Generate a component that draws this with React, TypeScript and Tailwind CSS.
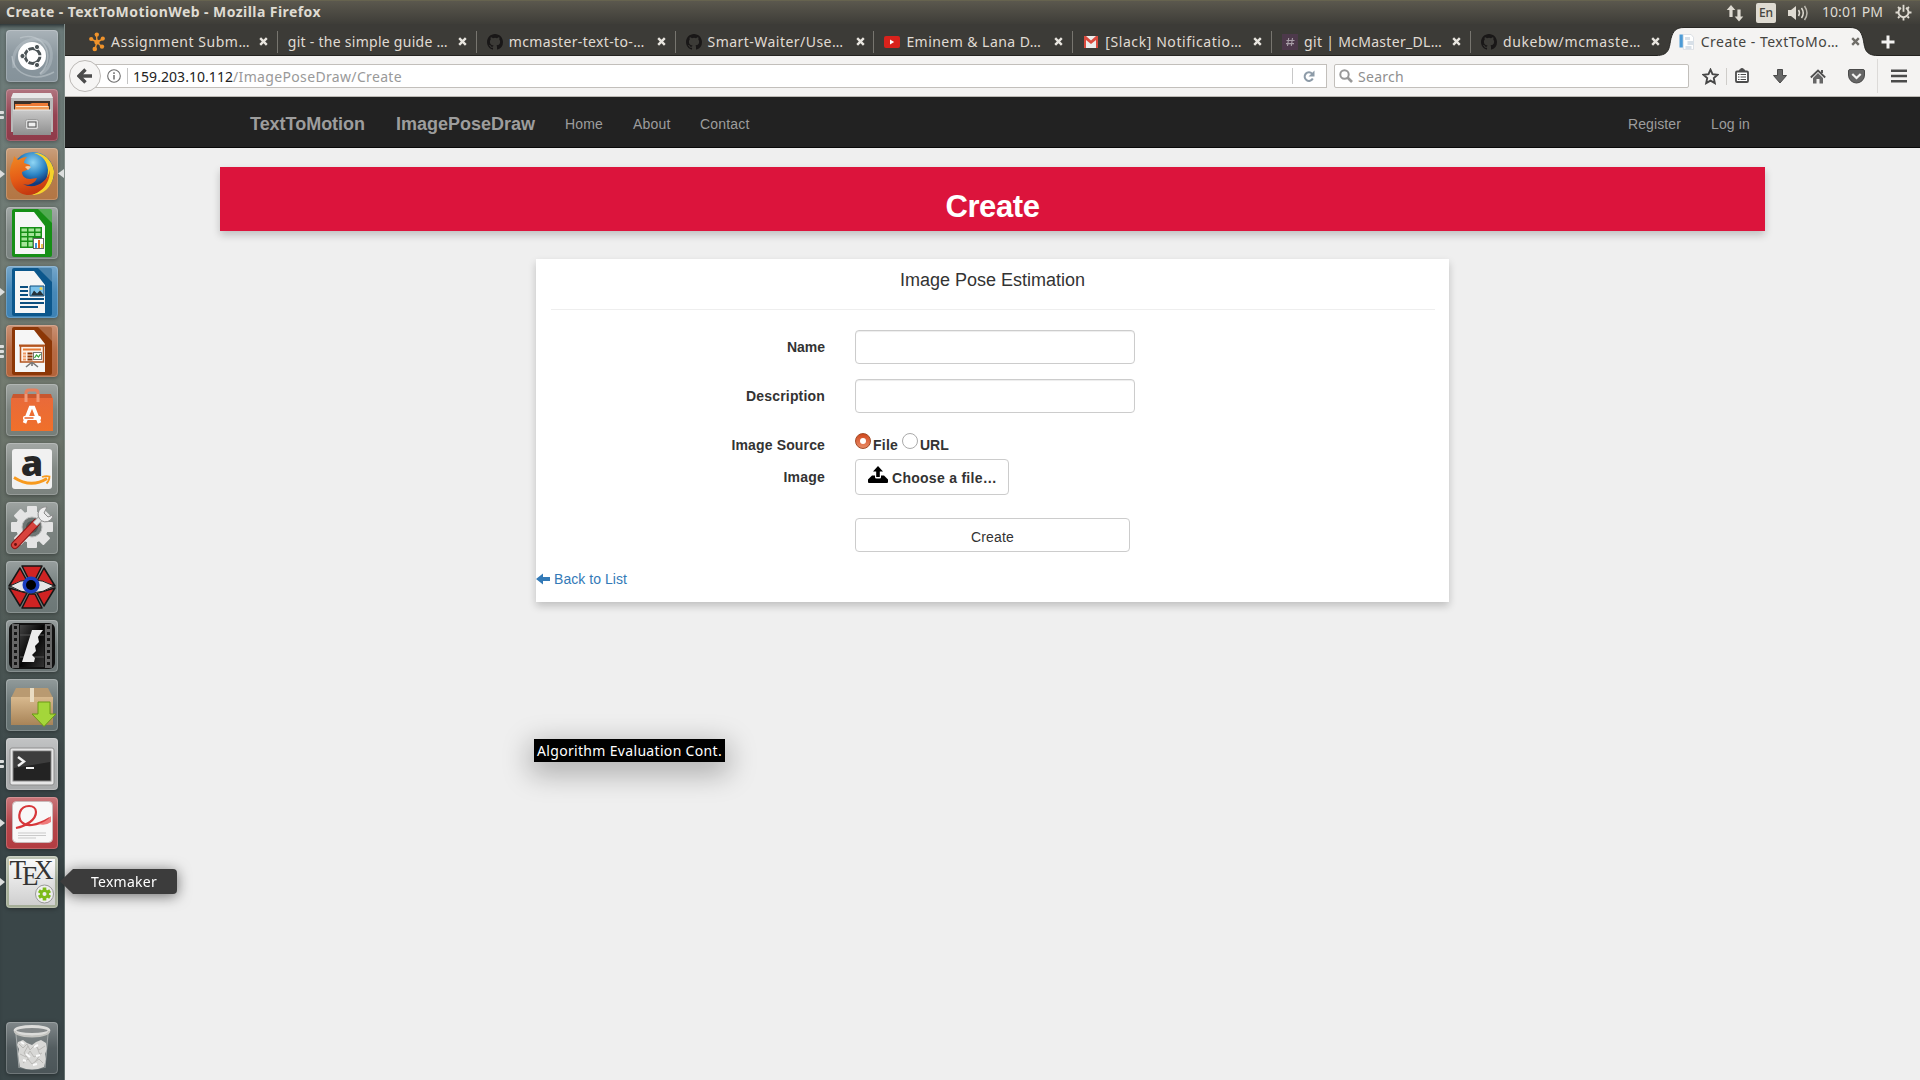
import React, { useLayoutEffect, useRef, useState } from "react";

/* Text whose tracking is adjusted so that it fills a given width. */
function Fit({ w, className = "", children }: { w: number; className?: string; children: string }) {
  const ref = useRef<HTMLSpanElement>(null);
  const [ls, setLs] = useState(0);
  useLayoutEffect(() => {
    if (ref.current) {
      const natural = ref.current.getBoundingClientRect().width - ls * children.length;
      setLs((w - natural) / children.length);
    }
  }, [w, children]);
  return (
    <span ref={ref} className={`inline-block whitespace-pre ${className}`} style={{ letterSpacing: `${ls}px` }}>
      {children}
    </span>
  );
}

const UI = "font-['Noto_Sans','Open_Sans',sans-serif]";

/* ---------- favicons ---------- */
const Flower = () => (
  <svg width="16" height="20" viewBox="0 0 16 20" fill="#f0932b" stroke="#f0932b">
    <path d="M8 10 7.5 3M8 10 2 7M8 10l6-3M8 10l-2 7M8 10l5 5" strokeWidth="1.4" />
    <g stroke="none">
      <circle cx="8" cy="10" r="2.6" /><circle cx="7.8" cy="2.6" r="2.2" /><circle cx="2.2" cy="7" r="2.1" />
      <circle cx="13.8" cy="6.6" r="2.1" /><circle cx="5.8" cy="17" r="2.3" /><circle cx="13" cy="14.6" r="2.2" />
    </g>
  </svg>
);
const Github = () => (
  <svg width="16" height="16" viewBox="0 0 16 16" fill="#191717">
    <path d="M8 0C3.58 0 0 3.58 0 8c0 3.54 2.29 6.53 5.47 7.59.4.07.55-.17.55-.38 0-.19-.01-.82-.01-1.49-2.01.37-2.53-.49-2.69-.94-.09-.23-.48-.94-.82-1.13-.28-.15-.68-.52-.01-.53.63-.01 1.08.58 1.23.82.72 1.21 1.87.87 2.33.66.07-.52.28-.87.51-1.07-1.78-.2-3.64-.89-3.64-3.95 0-.87.31-1.59.82-2.15-.08-.2-.36-1.02.08-2.12 0 0 .67-.21 2.2.82a7.42 7.42 0 0 1 4 0c1.53-1.04 2.2-.82 2.2-.82.44 1.1.16 1.92.08 2.12.51.56.82 1.27.82 2.15 0 3.07-1.87 3.75-3.65 3.95.29.25.54.73.54 1.48 0 1.07-.01 1.93-.01 2.2 0 .21.15.46.55.38A8.01 8.01 0 0 0 16 8c0-4.42-3.58-8-8-8Z" />
  </svg>
);
const Youtube = () => (
  <svg width="16" height="12" viewBox="0 0 16 12"><rect width="16" height="12" rx="2" fill="#d9221c" /><path d="M6 3.6v4.8L10.200 6z" fill="#fff" /></svg>
);
const Gmail = () => (
  <svg width="14" height="12" viewBox="0 0 14 12"><path fill="#ececec" d="M0 0h14v12H0z" /><path fill="#d94a3e" d="M0 0h2l5 4.500L12 0h2v12h-2V4L7 8 2 4v8H0z" /></svg>
);
const Slack = () => (
  <svg width="16" height="16" viewBox="0 0 16 16"><rect width="16" height="16" fill="#4d394b" /><path d="M6.700 4 5.500 12M10.500 4 9.300 12M4.500 6.500h8M4 9.600h8" stroke="#a99fa8" strokeWidth="1.100" /></svg>
);
const DocIcon = () => (
  <svg width="16" height="16" viewBox="0 0 16 16">
    <path fill="#fff" stroke="#c8d0d8" strokeWidth=".6" d="M4.300.4H12l2.500 3v12H4.300z" />
    <path fill="#4d9bd6" d="M.5.500h3.300v13H.5z" /><path fill="#d8e0e8" d="M6 3h5v3H6zM8.500 7h6.500v4H8.500zM6.500 12h6v3h-6z" />
  </svg>
);

type TabDef = { title: string; w: number; icon?: React.ReactNode };
const tabs: TabDef[] = [
  { title: "Assignment Subm…", w: 139, icon: <Flower /> },
  { title: "git - the simple guide …", w: 160 },
  { title: "mcmaster-text-to-…", w: 136, icon: <Github /> },
  { title: "Smart-Waiter/Use…", w: 136, icon: <Github /> },
  { title: "Eminem & Lana D…", w: 135, icon: <Youtube /> },
  { title: "[Slack] Notificatio…", w: 137, icon: <Gmail /> },
  { title: "git | McMaster_DL…", w: 138, icon: <Slack /> },
  { title: "dukebw/mcmaste…", w: 138, icon: <Github /> },
];

const Cross = ({ color }: { color: string }) => (
  <svg width="9" height="9" viewBox="0 0 9 9" className="shrink-0"><path d="m1.200 1.200 6.600 6.600M7.800 1.200 1.200 7.800" stroke={color} strokeWidth="2.400" /></svg>
);

function TopPanel() {
  return (
    <div className={`flex h-6 shrink-0 items-center justify-between border-t border-[#66634f] bg-linear-to-b from-[#5b584e] to-[#3e3d38] pl-1.5 pr-2 text-[#dfdbd2] ${UI}`}>
      <Fit w={315} className="-mt-px text-[14px] font-bold leading-[20px]">Create - TextToMotionWeb - Mozilla Firefox</Fit>
      <div className="flex items-center">
        <svg width="18" height="18" viewBox="0 0 18 18" fill="#dfdbd2" className="mr-[12px]">
          <path d="M5 1 9.300 6H6.600v7H3.400V6H.7zM13 17.500l-4.300-5h2.700v-7h3.200v7h2.700z" />
        </svg>
        <div className="mr-3 flex h-5 w-5 items-center justify-center rounded-[2px] bg-[#dfdbd2] text-[12px] font-medium text-[#45443e]">En</div>
        <svg width="21" height="18" viewBox="0 0 21 18" className="mr-[13px]" fill="none" stroke="#dfdbd2" strokeWidth="1.500">
          <path fill="#dfdbd2" stroke="none" d="M0 6h3l5-4v14l-5-4H0z" /><path d="M10.500 6q2 3 0 6M13.500 4q3.500 5 0 10" /><path d="M16.500 2q5 7 0 14" opacity=".75" />
        </svg>
        <Fit w={61} className="-mt-[2px] mr-[12px] text-[14px] leading-[20px]">10:01 PM</Fit>
        <svg width="17" height="17" viewBox="0 0 17 17" fill="none" stroke="#dfdbd2">
          <path d="M6 3.900a5 5 0 1 0 5 0" strokeWidth="1.900" /><path d="M8.500.800v7" strokeWidth="1.800" />
          <path d="M3 3l1.500 1.500M14 3l-1.500 1.500M.5 8.500h3M16.500 8.500h-3M3 14l1.500-1.500M14 14l-1.500-1.500M8.500 16.500v-3" strokeWidth="1.800" />
        </svg>
      </div>
    </div>
  );
}

function TabStrip() {
  return (
    <div className={`flex h-8 shrink-0 border-b border-[#23221f] bg-[#3c3b37] pl-[14px] text-[14px] text-[#e0dcd4] ${UI}`}>
      {tabs.map((t, i) => (
        <div key={i} className="flex h-8 w-[198.850px] shrink-0 items-center pt-[3px]">
          <div className="flex w-[174px] items-center pl-[10px]">
            {t.icon && <span className="mr-1.5 flex w-4 justify-center">{t.icon}</span>}
            <Fit w={t.w} className="leading-5">{t.title}</Fit>
          </div>
          <span className="ml-[6px] flex w-[9px]"><Cross color="#e8e5df" /></span>
          <span className={`ml-auto h-[22px] w-px ${i === 7 ? "" : "bg-[#77756f]"}`} />
        </div>
      ))}
      <div className="relative -ml-[13px] h-8 w-[224px] shrink-0 text-[#45443f]">
        <svg width="224" height="33" viewBox="0 0 224 33" className="absolute left-0 top-0">
          <path fill="#f4f3f2" stroke="#282724" d="M-1 31.500c14 0 13-8 15-17C16 7 19 3.500 27 3.500h166c8 0 11 3.500 13 11 2 9 1 17 15 17v4H-1z" />
          <path fill="#f4f3f2" d="M0 32h222v2H0z" />
        </svg>
        <div className="relative flex h-8 items-center pl-[22px] pt-[3px]">
          <DocIcon />
          <Fit w={138} className="ml-1.5 leading-5">Create - TextToMo…</Fit>
          <span className="ml-[12px] flex"><Cross color="#6f6d68" /></span>
        </div>
      </div>
      <svg width="14" height="14" viewBox="0 0 14 14" className="mt-[11px]"><path d="M7 .500v13M.500 7h13" stroke="#f4f3f2" strokeWidth="3" /></svg>
    </div>
  );
}

function Toolbar() {
  return (
    <div className={`flex h-[41px] shrink-0 items-center border-b border-[#bcb9b4] bg-[#f4f3f2] pl-1 text-[14px] ${UI}`}>
      <div className="relative z-10 flex h-8 w-8 items-center justify-center rounded-full border border-[#bcb9b6] bg-[#f6f5f4]">
        <svg width="16" height="16" viewBox="0 0 16 16"><path d="M8.500 1.500 2 8l6.500 6.500M2.500 8H15" fill="none" stroke="#4c4c4c" strokeWidth="3.400" /></svg>
      </div>
      <div className="-ml-4 flex h-6 w-[1242px] items-center border border-[#c2bfbb] bg-white pl-[21px]">
        <svg width="14" height="14" viewBox="0 0 14 14" fill="none" stroke="#6d6d6d"><circle cx="7" cy="7" r="6.300" strokeWidth="1.100" /><path d="M7 6v4.500M7 3.300V5" strokeWidth="1.500" /></svg>
        <span className="ml-[6px] h-4 w-px bg-[#c4c4c4]" />
        <span className="ml-[5px] flex pt-px leading-5 text-[#999]">
          <Fit w={100} className="text-[#222]">159.203.10.112</Fit>
          <Fit w={169}>/ImagePoseDraw/Create</Fit>
        </span>
        <span className="ml-auto h-4 w-px bg-[#c8c8c8]" />
        <svg width="12" height="13" viewBox="0 0 12 13" className="ml-[10px] mr-[11px]"><path d="M9.800 8.500a4.300 4.300 0 1 1-.6-4.700" fill="none" stroke="#8d9ba8" strokeWidth="2" /><path d="M11.500.500v6h-6z" fill="#8d9ba8" /></svg>
      </div>
      <div className="ml-[7px] flex h-6 w-[355px] items-center rounded-[2px] border border-[#c2bfbb] bg-white pl-1">
        <svg width="14" height="14" viewBox="0 0 14 14" fill="none" stroke="#989898"><circle cx="5.500" cy="5.500" r="4.200" strokeWidth="2" /><path d="m8.500 8.500 4.500 4.500" strokeWidth="2.600" /></svg>
        <Fit w={46} className="ml-[5px] pt-px leading-5 text-[#8f8f8f]">Search</Fit>
      </div>
      <svg width="17" height="17" viewBox="0 0 17 17" className="ml-[13px]"><path d="m8.500 1.700 2 4.500 5 .6-3.700 3.300 1 5-4.300-2.500-4.300 2.500 1-5L1.500 6.800l5-.6z" fill="none" stroke="#474747" strokeWidth="1.900" /></svg>
      <span className="ml-[7px] h-[17px] w-px bg-[#cfcdca]" />
      <svg width="14" height="16" viewBox="0 0 14 16" className="ml-[8px]" fill="none" stroke="#4c4c4c">
        <rect x="1" y="3.500" width="12" height="10.500" rx="1" strokeWidth="1.800" fill="#fff" /><path d="M4 3q1-2.500 3-2.500T10 3z" fill="#4c4c4c" /><path d="M3 6.500h1.500M3 9h1.500M3 11.500h1.500M5.500 6.500h5.500M5.500 9h5.500M5.500 11.500h5.500" strokeWidth="1" />
      </svg>
      <svg width="14" height="15" viewBox="0 0 14 15" className="ml-[24px]"><path d="M4.500.500h5v6h4L7 14 .500 6.500h4z" fill="#666" stroke="#494949" /></svg>
      <svg width="16" height="15" viewBox="0 0 16 15" className="ml-[23px]"><path d="M3 9v5.500h3.500V10h3v4.500H13V9L8 4z" fill="#666" /><path d="m.8 8.500 7.200-7 7.200 7" fill="none" stroke="#4f4f4f" strokeWidth="1.800" /><path d="M11 1h2v3h-2z" fill="#555" /></svg>
      <svg width="17" height="15" viewBox="0 0 17 15" className="ml-[22px]"><path d="M2 .500h13q1.500 0 1.500 1.500v4a8 8 0 0 1-16 0V2Q.500.500 2 .500z" fill="#666" stroke="#4a4a4a" /><path d="m4.300 5 4.200 4 4.200-4" fill="none" stroke="#f4f3f2" strokeWidth="2.200" /></svg>
      <span className="ml-[12px] h-[34px] w-px bg-[#dcdad8]" />
      <svg width="16" height="14" viewBox="0 0 16 14" className="ml-[13px]"><path d="M0 1.700h16M0 7h16M0 12.300h16" stroke="#4b4b4b" strokeWidth="2.500" /></svg>
    </div>
  );
}

/* ---------- launcher icons, each drawn on a 52px tile ---------- */
const Ubuntu = () => (
  <>
    <path d="M8 38C4 14 26 4 40 12c8 6 8 26-6 32" fill="none" stroke="#c9d2d6" strokeWidth="3" opacity=".35" />
    <path d="M14 8C36 0 52 26 34 44M6 26c2 20 24 26 42 16" fill="none" stroke="#c9d2d6" strokeWidth="1.500" opacity=".5" />
    <circle cx="26" cy="26" r="14" fill="#fff" />
    <circle cx="26.500" cy="26" r="7.500" fill="none" stroke="#4b5356" strokeWidth="3" />
    <path d="M26 26 36 26M26 26l-6-9M26 26l-6 9" stroke="#fff" strokeWidth="1.300" />
    <g fill="#4b5356" stroke="#fff" strokeWidth="1"><circle cx="16.500" cy="26" r="2.600" /><circle cx="31" cy="17" r="2.600" /><circle cx="31" cy="35" r="2.600" /></g>
  </>
);
const Files = () => (
  <>
    <path d="M7 5h38l2 5v33H5V10z" fill="#b9b9b9" /><path d="M7 4h38l2 5H5z" fill="#e8e8e8" />
    <path d="M8 12h36v12H8z" fill="#3b3029" /><path d="M9 15h15l2-1h16v8H9z" fill="#ee7a35" /><path d="M9 17h34v5H9z" fill="#f09a55" /><path d="M10 17.500h32" stroke="#fbe3c6" />
    <path d="M7 21h38v25H7z" fill="url(#gGrey)" /><path d="M7 21h38" stroke="#e9e9e9" />
    <rect x="19.500" y="30.500" width="13" height="10" rx="2" fill="#ddd" stroke="#9a9a9a" /><rect x="22" y="33" width="8" height="5" fill="#eee" stroke="#4b4b4b" />
  </>
);
const Firefox = () => (
  <>
    <circle cx="27" cy="25" r="21" fill="url(#gBlue)" />
    <path d="M28 5c8-1 18 6 20 18 0 14-9 24-22 24 9-4 16-14 16-25-1-9-5-14-14-17z" fill="#f6d22c" />
    <path d="M44 22c0 14-9 24-21 25-12 0-19-10-19-22 0-5 1-8 3-12l1-5 4 4c3-2 6-3 9-3-2 2-3 4-3 6l6 2-1 4-7 3c0 4 3 7 8 7l7-1c-2 6-9 8-14 6 11 6 24-1 27-14z" fill="url(#gFox)" />
    <path d="M19 19q3-2 6 0l-3 3z" fill="#fbc99b" />
  </>
);
const Doc = ({ c, children }: { c: string; children: React.ReactNode }) => (
  <>
    <path d="M8 2h25l13 13v33q0 2-2 2H8q-2 0-2-2V4q0-2 2-2z" fill={c} />
    <path d="M29 2h15q2 0 2 2v15z" fill={c} /><path d="M32 2h12q2 0 2 2v12z" fill="#fff" opacity=".25" />
    <path d="M9 5h19l11 14v28H9z" fill="#f6f6f6" />{children}
  </>
);
const Calc = () => (
  <Doc c="#168f16">
    <path d="M14 20h22v21H14z" fill="#168f16" /><path d="M15.500 21.500h5.500v3h-5.500zM22.500 21.500h5.500v3h-5.500zM29.500 21.500h5v3h-5zM15.500 26h5.500v3h-5.500zM22.500 26h5.500v3h-5.500zM29.500 26h5v3h-5zM15.500 30.500h5.500v3h-5.500zM22.500 30.500h4v3h-4zM15.500 35h5.500v4.500h-5.500zM22.500 35h4v4.500h-4z" fill="#a5e59a" />
    <rect x="27.500" y="31.500" width="10" height="10" fill="#fff" stroke="#666" /><path d="M30 36v5" stroke="#3a8fd9" strokeWidth="2" /><path d="M33 33v8" stroke="#e5661a" strokeWidth="2" /><path d="M36 37v4" stroke="#e9b41a" strokeWidth="1.500" />
  </Doc>
);
const Writer = () => (
  <Doc c="#0c578c">
    <path d="M14 21h8M14 25h8M14 29h8M14 33h24M14 37h24M14 41h18" stroke="#0c4f80" strokeWidth="2" />
    <path d="M24 20h14v10H24z" fill="#7cc2ea" stroke="#0c4f80" /><path d="M25 29.500l3-5 3 3 3-3 4 5z" fill="#26323a" /><circle cx="35" cy="22.500" r="1.500" fill="#f0d24a" />
  </Doc>
);
const Impress = () => (
  <Doc c="#8c3707">
    <path d="M14.500 21h23v16h-23z" fill="#fdf1e8" stroke="#b3541e" strokeWidth="1.500" /><path d="M13 20.500h26" stroke="#b3541e" strokeWidth="2" />
    <path d="M17 24.500h18" stroke="#e57a35" strokeWidth="2" /><path d="M17 28.500h3M17 31.500h3M17 34.500h3" stroke="#ef9a64" strokeWidth="2" /><path d="M21.500 28.500h5M21.500 31.500h5M21.500 34.500h5" stroke="#8c3707" strokeWidth="2" />
    <rect x="27.500" y="27.500" width="8" height="7" fill="#fff" stroke="#777" /><path d="m28.500 33 2-3 2 2 2-3" fill="none" stroke="#3ca83c" strokeWidth="1.300" /><path d="m20 42 5-4h2l5 4M26 37v4" fill="none" stroke="#777" strokeWidth="1.600" />
  </Doc>
);
const Software = () => (
  <>
    <path d="M20 18v-9q0-3 3-3h6q3 0 3 3v9" fill="none" stroke="#e5805e" strokeWidth="3" />
    <path d="M7 10h38l2 6H5z" fill="#c8572f" /><path d="M5 14h42v33H5z" fill="url(#gOrange)" />
    <path d="M20 18v-8M32 18v-8" stroke="#f09a78" strokeWidth="3" />
    <path d="m18.500 39 6-15.500h3l6 15.500" fill="none" stroke="#fff" strokeWidth="3.600" /><rect x="17" y="32" width="18" height="4" rx="1.500" fill="#fff" /><path d="M18.500 34h9" stroke="#e8632c" strokeWidth="1.500" />
  </>
);
const Amazon = () => (
  <>
    <rect x="6" y="6" width="40" height="40" rx="3" fill="#f1f1f1" />
    <text x="26" y="32.500" textAnchor="middle" fontFamily="Open Sans" fontWeight="800" fontSize="36" fill="#262626">a</text>
    <path d="M8 34.500q17 11 33 1" fill="none" stroke="#f79a1e" strokeWidth="2.800" /><path d="M36 34q4-1.500 7.500-.500 0 4-3 7" fill="none" stroke="#f79a1e" strokeWidth="1.800" />
  </>
);
const Settings = () => (
  <>
    <g fill="#e4e4e4">
      {[0, 45, 90, 135].map((a) => <rect key={a} x="21" y="4" width="10" height="42" rx="1" transform={`rotate(${a} 26 25)`} />)}
      <circle cx="26" cy="25" r="16" />
    </g>
    <circle cx="26" cy="25" r="10" fill="#6f7674" stroke="#bbb" /><circle cx="26" cy="25" r="6" fill="#4e5553" />
    <path d="M9 43 30 21" stroke="#8e1515" strokeWidth="8" strokeLinecap="round" /><path d="M9 43 30 21" stroke="#d8433d" strokeWidth="6" strokeLinecap="round" />
    <path d="m29 22 9-9" stroke="#9a9a9a" strokeWidth="6" /><path d="m29 22 9-9" stroke="#e2e4e4" strokeWidth="4.500" />
    <path d="M41 5a7.500 7.500 0 1 0 6 8l-5 2-4-4z" fill="#eee" stroke="#8a8a8a" /><circle cx="9.500" cy="42.500" r="1.400" fill="#611" />
  </>
);
const EyeIcon = () => (
  <>
    <g fill="#cf2323" stroke="#161616" strokeWidth="1.500" strokeLinejoin="round">
      <path d="M16 5h20l-7 14h-6z" /><path d="M16 47h20l-7-14h-6z" /><path d="M14 7 3 25l18-5z" /><path d="M38 7l11 18-18-5z" /><path d="M14 45 3 27l18 5z" /><path d="M38 45l11-18-18 5z" />
    </g>
    <path d="M4 25q21-13 44 0-22 14-44 0z" fill="#e5e5e5" stroke="#222" /><circle cx="25" cy="24" r="8.500" fill="#1a3ec0" /><circle cx="25" cy="24" r="5" fill="#000" />
  </>
);
const Film = () => (
  <>
    <rect x="3" y="3" width="46" height="46" rx="6" fill="#111" /><path d="M6 4h7v44H6zM39 4h7v44h-7z" fill="#666" /><path d="M14 5h24v42H14z" fill="url(#gDark)" />
    <path d="M9.500 6v42M42.500 6v42" stroke="#151515" strokeWidth="3" strokeDasharray="3 3" /><path d="M14 15h24M14 37h24" stroke="#555" />
    <path d="M26 10h11l-3 4-2 3 1 5-4 4 1 5-4 4 3 3-1 4H16z" fill="#ececec" />
  </>
);
const Package = () => (
  <>
    <path d="M10 9h32l5 10H5z" fill="#b99a71" /><path d="M5 18h42v28H5z" fill="url(#gBox)" /><path d="M24 9h4v14h-4z" fill="#e9dcc3" />
    <path d="M32 23h12v12h6L38 47.500 26 35h6z" fill="#a4d63a" stroke="#6a9a14" />
  </>
);
const Terminal = () => (
  <>
    <rect x="4" y="10" width="44" height="37" rx="2" fill="#e6e6e6" stroke="#8e8e8e" /><rect x="7" y="13" width="38" height="30" fill="#232323" stroke="#888" /><path d="M8 14h36v10L8 30z" fill="#fff" opacity=".12" />
    <path d="m12 19 6 4.500-6 4.500" fill="none" stroke="#f2f2f2" strokeWidth="2.400" /><path d="M20 30h8" stroke="#f2f2f2" strokeWidth="2" />
  </>
);
const Reader = () => (
  <>
    <rect x="6.500" y="4.500" width="40" height="41" rx="4" fill="#f8f8f8" stroke="#c9b9b9" />
    <path d="M10 31c10-2 20-8 20-16 0-8-13-8-16 0-3 9 4 14 12 13 7-1 13-4 18-7" fill="none" stroke="#d7373a" strokeWidth="2.200" /><path d="M32 27q8-2 13-8v6q-5 4-13 2z" fill="#ef7b7b" />
    <path d="M12 36h28M12 38.500h28M12 41h18" stroke="#c9c9c9" />
  </>
);
const Tex = () => (
  <>
    <rect x="3" y="3" width="46" height="46" fill="url(#gPaper)" />
    <text fontFamily="Liberation Serif" fill="#333" fontSize="27" x="3.500" y="23">T<tspan x="16" y="29">E</tspan><tspan x="28" y="23">X</tspan></text>
    <circle cx="38.500" cy="38" r="9" fill="#eee" stroke="#999" />
    <g fill="#7dbb1a">{[0, 60, 120].map((a) => <rect key={a} x="36.700" y="31.500" width="3.600" height="13" transform={`rotate(${a} 38.500 38)`} />)}<circle cx="38.500" cy="38" r="4.500" /></g><circle cx="38.500" cy="38" r="2" fill="#eee" />
  </>
);
const Trash = () => (
  <>
    <path d="M9 10h34l-4 36q-13 4-26 0z" fill="#8a8f90" opacity=".5" />
    <path d="M12 20l5-2 4 3 5 2 4-3 5-2 5 3 1 6-2 5 1 5-2 8q-12 5-24 0l-1-6-1-7 1-5-2-4z" fill="#d8d8d6" />
    <path d="m13 22 4 4 4-4 3 6 5-5 4 5 6-4M14 32l6 3 4-6 4 6 8-4M17 41l5-4 4 5 7-5 4 4M22 24l-4 7 5 7M31 25l3 8-5 7" fill="none" stroke="#bab9b6" strokeWidth="1" />
    <path d="m15 20 3 2M28 25l4-2M20 32l4 3M30 34l4-1M17 38l3 1M27 43l4-1" stroke="#fafafa" strokeWidth="2" />
    <path d="M10 12l3 34M42 12l-3 34" stroke="#b8bcbc" strokeWidth="1" opacity=".7" />
    <ellipse cx="26" cy="8.500" rx="17" ry="4" fill="#85898a" stroke="#dcdcda" strokeWidth="2.800" /><path d="M9 9q0 5 17 5.500Q43 14 43 9" fill="none" stroke="#c4c4c0" strokeWidth="2" />
  </>
);

type Item = { icon: React.ReactNode; bg: string; marks?: number };
const items: Item[] = [
  { icon: <Ubuntu />, bg: "bg-[#85929a]" },
  { icon: <Files />, bg: "bg-[#8f3a49]", marks: 2 },
  { icon: <Firefox />, bg: "bg-[#b37644]", marks: 1 },
  { icon: <Calc />, bg: "bg-[#7b8481]" },
  { icon: <Writer />, bg: "bg-[#3d82b4]", marks: 1 },
  { icon: <Impress />, bg: "bg-[#b3633a]", marks: 3 },
  { icon: <Software />, bg: "bg-[#767e79]" },
  { icon: <Amazon />, bg: "bg-[#7c837f]" },
  { icon: <Settings />, bg: "bg-[#757d7a]" },
  { icon: <EyeIcon />, bg: "bg-[#6c7776]" },
  { icon: <Film />, bg: "bg-[#6a7474]" },
  { icon: <Package />, bg: "bg-[#637070]" },
  { icon: <Terminal />, bg: "bg-[#a9abac]", marks: 2 },
  { icon: <Reader />, bg: "bg-[#b23c41]", marks: 1 },
  { icon: <Tex />, bg: "bg-[#a5ae97]", marks: 1 },
];

function Tile({ icon, bg, marks }: Item) {
  return (
    <div className={`relative h-[52px] w-[52px] shrink-0 rounded-[4px] shadow-[0_1px_4px_rgba(0,0,0,0.35)] ${bg}`}>
      <div className="absolute inset-0 rounded-[4px] bg-linear-to-b from-white/30 via-white/5 to-transparent" />
      <svg width="52" height="52" viewBox="0 0 52 52" className="relative">{icon}</svg>
      <div className="absolute inset-0 rounded-[4px] border border-white/20" />
      {marks === 1 && <svg width="5" height="8" viewBox="0 0 5 8" className="absolute -left-1.5 top-[22px]"><path d="M0 0l5 4-5 4z" fill="#dcdedd" /></svg>}
      {marks !== undefined && marks > 1 && (
        <div className="absolute -left-1.5 top-0 flex h-[52px] flex-col justify-center gap-[2px]">
          {Array.from({ length: marks }, (_, k) => <span key={k} className="h-[3px] w-1 rounded-r-[1px] bg-[#dcdedd]" />)}
        </div>
      )}
    </div>
  );
}

function Launcher() {
  return (
    <div className="relative flex w-[65px] shrink-0 flex-col gap-[7px] border-r border-[#a3aca8]/40 bg-linear-to-b from-[#6d7c7b] via-[#737b70] via-35% to-[#3a4648] to-72% pb-[6px] pl-1.5 pt-1.5 shadow-[inset_0_5px_5px_-3px_#20282a]">
      <svg width="0" height="0" className="absolute">
        <defs>
          <linearGradient id="gGrey" x2="0" y2="1"><stop stopColor="#c9c9c9" /><stop offset="1" stopColor="#8f8f8f" /></linearGradient>
          <radialGradient id="gBlue" cy=".25"><stop stopColor="#8fd6f5" /><stop offset=".6" stopColor="#2a83c4" /><stop offset="1" stopColor="#123a7c" /></radialGradient>
          <linearGradient id="gFox" x2=".3" y2="1"><stop stopColor="#f08a24" /><stop offset=".6" stopColor="#e55b16" /><stop offset="1" stopColor="#c63a10" /></linearGradient>
          <linearGradient id="gOrange" x2="0" y2="1"><stop stopColor="#e96a3a" /><stop offset="1" stopColor="#f0702a" /></linearGradient>
          <linearGradient id="gDark" x2="1" y2="1"><stop stopColor="#444" /><stop offset=".5" stopColor="#050505" /><stop offset="1" stopColor="#333" /></linearGradient>
          <linearGradient id="gBox" x2="0" y2="1"><stop stopColor="#d8b98e" /><stop offset="1" stopColor="#a88458" /></linearGradient>
          <linearGradient id="gPaper" x2="0" y2="1"><stop stopColor="#fafafa" /><stop offset="1" stopColor="#cfcfcf" /></linearGradient>
        </defs>
      </svg>
      {items.map((it, i) => <Tile key={i} {...it} />)}
      <div className="mt-auto"><Tile icon={<Trash />} bg="bg-[#4b5558]" /></div>
      <svg width="6" height="9" viewBox="0 0 6 9" className="absolute right-0 top-[145px]"><path d="M6 0 0 4.500 6 9z" fill="#dcdedd" /></svg>
    </div>
  );
}

function Navbar() {
  return (
    <nav className="flex h-[51px] shrink-0 items-center border-b border-[#080808] bg-[#222] pl-[185px] pr-[170px] pt-[3px] text-[14px] text-[#9d9d9d]">
      <Fit w={115} className="text-[18px] font-bold">TextToMotion</Fit>
      <Fit w={139} className="ml-[31px] text-[18px] font-bold">ImagePoseDraw</Fit>
      <Fit w={38} className="ml-[30px]">Home</Fit>
      <Fit w={37.500} className="ml-[30px]">About</Fit>
      <Fit w={49.500} className="ml-[29.500px]">Contact</Fit>
      <Fit w={53} className="ml-auto">Register</Fit>
      <Fit w={39} className="ml-[30px]">Log in</Fit>
    </nav>
  );
}

const label = "w-[289px] pt-[7px] text-right font-bold leading-5";
const input = "ml-[30px] h-[34px] w-[280px] rounded-[4px] border border-[#ccc] bg-white shadow-[inset_0_1px_1px_rgba(0,0,0,0.075)] outline-none";
const raised = "shadow-[0_4px_8px_0_rgba(0,0,0,0.2)]";

function FormCard() {
  return (
    <div className={`ml-[471px] mt-7 h-[343px] w-[913px] bg-white ${raised}`}>
      <div className="pt-[10px] text-center text-[18px] leading-[22px]"><Fit w={185}>Image Pose Estimation</Fit></div>
      <div className="ml-[15px] mr-[14px] mt-[18px] h-px bg-[#eee]" />
      <div className="mt-5 flex"><label className={label}><Fit w={38}>Name</Fit></label><input className={input} /></div>
      <div className="mt-[15px] flex"><label className={label}><Fit w={79}>Description</Fit></label><input className={input} /></div>
      <div className="mt-[15px] flex h-[31px]">
        <label className={label}><Fit w={93.500}>Image Source</Fit></label>
        <div className="ml-[30px] flex pt-[7px] font-bold leading-5">
          <span className="-mt-[2px] flex h-4 w-4 items-center justify-center rounded-full border border-[#a34a25] bg-linear-to-b from-[#d0481b] to-[#e88a65]"><span className="h-1.5 w-1.5 rounded-full bg-white" /></span>
          <span className="ml-[2px] w-[25px]"><Fit w={25}>File</Fit></span>
          <span className="-mt-[2px] ml-1 h-4 w-4 rounded-full border border-[#aaa] bg-white" />
          <span className="ml-[2px]">URL</span>
        </div>
      </div>
      <div className="flex">
        <label className="w-[289px] pt-[8px] text-right font-bold leading-5"><Fit w={41.500}>Image</Fit></label>
        <div className="ml-[30px] flex h-9 w-[154px] items-center rounded-[4px] border border-[#ccc] pl-3 font-bold">
          <svg width="20" height="17" viewBox="0 0 20 17" className="-mt-[6px]"><path d="M10 0l5 5.500h-3.200V11H8.200V5.500H5z" /><path d="M4 9.500h3v1.700q0 1.300 1.500 1.300h3q1.500 0 1.500-1.300V9.500h3l4 4V16q0 1-1 1H1q-1 0-1-1v-2.500z" /></svg>
          <Fit w={105} className="ml-1 mt-px">Choose a file…</Fit>
        </div>
      </div>
      <div className="ml-[319px] mt-[23px] flex h-[34px] w-[275px] items-center justify-center rounded-[4px] border border-[#ccc] pt-1"><Fit w={43}>Create</Fit></div>
      <a className="mt-[17px] flex items-center leading-5 text-[#337ab7]">
        <svg width="14" height="12" viewBox="0 0 14 12" fill="#337ab7"><path d="M0 6 7 .500V4h7v4H7v3.500z" /></svg>
        <Fit w={73} className="ml-1">Back to List</Fit>
      </a>
    </div>
  );
}

export default function App() {
  return (
    <div className="relative flex h-[1080px] w-[1920px] flex-col overflow-hidden bg-[#efefef]">
      <TopPanel />
      <div className="flex min-h-0 flex-1">
        <Launcher />
        <div className="flex min-w-0 flex-1 flex-col">
          <TabStrip />
          <Toolbar />
          <div className="flex flex-1 flex-col font-['Liberation_Sans',Arial,sans-serif] text-[14px] leading-5 text-[#333]">
            <Navbar />
            <div className={`mx-[155px] mt-[19px] flex h-16 items-center justify-center bg-[#dc143c] pt-[14px] text-[31px] font-bold leading-none text-white ${raised}`}>
              <Fit w={94}>Create</Fit>
            </div>
            <FormCard />
          </div>
        </div>
      </div>

      <div className={`absolute left-[534px] top-[739px] h-[23px] w-[191px] bg-black pl-[3px] text-[14px] leading-[23px] text-white shadow-[0_8px_28px_4px_rgba(0,0,0,0.28)] ${UI}`}>
        <Fit w={185}>Algorithm Evaluation Cont.</Fit>
      </div>
      <div className={`absolute left-[60px] top-[869px] flex drop-shadow-[0_2px_7px_rgba(0,0,0,0.55)] ${UI}`}>
        <svg width="13" height="25" viewBox="0 0 13 25"><path d="M13 0 0 12.500 13 25z" fill="#3c3c3c" /></svg>
        <div className="h-[25px] w-[104px] rounded-r-[4px] bg-[#3c3c3c] pl-[18px] text-[14px] leading-[25px] text-white"><Fit w={66}>Texmaker</Fit></div>
      </div>
    </div>
  );
}
